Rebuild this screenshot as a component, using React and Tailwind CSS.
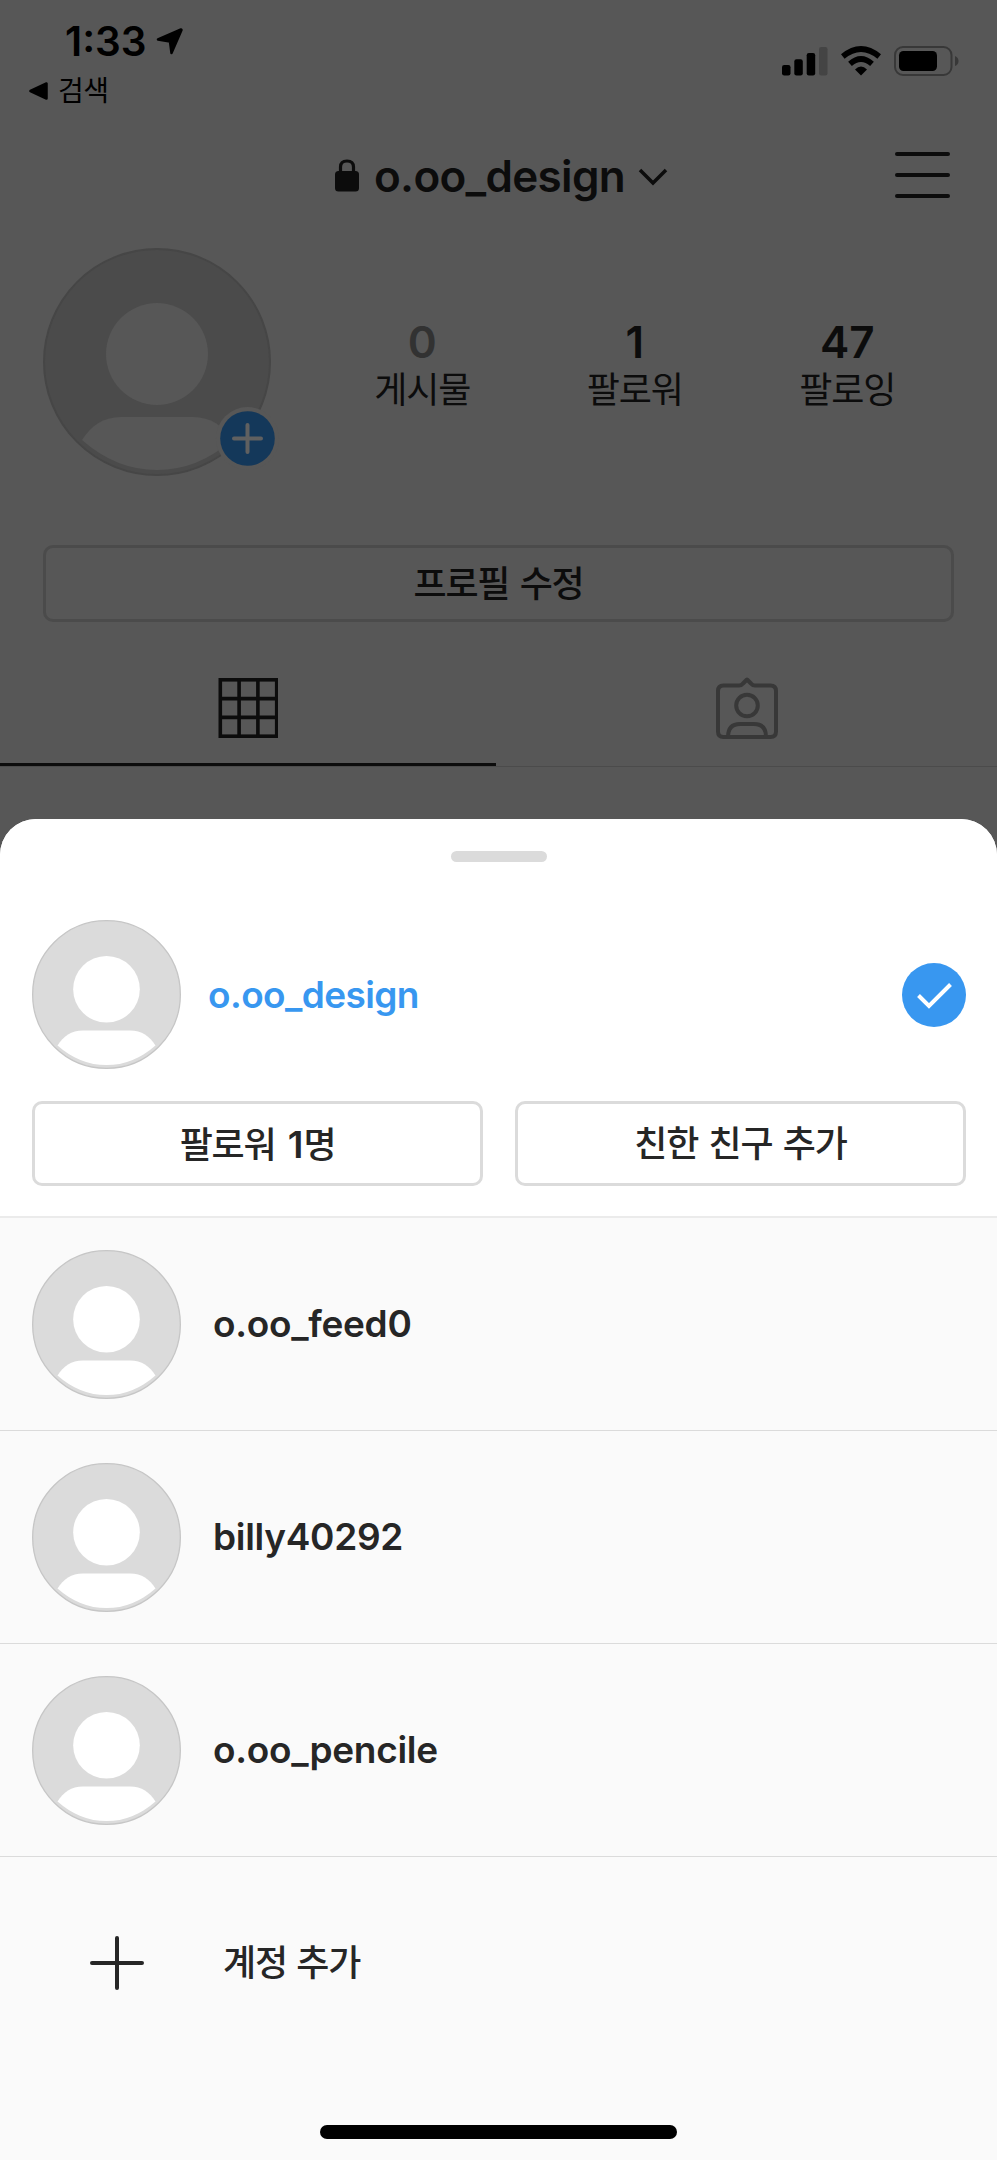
const accounts = ['o.oo_feed0', 'billy40292', 'o.oo_pencile'];

const stats = [
  { value: '0', label: '게시물', valueClass: 'text-[#323232]' },
  { value: '1', label: '팔로워', valueClass: 'text-[#0c0c0c]' },
  { value: '47', label: '팔로잉', valueClass: 'text-[#0c0c0c]' },
];

const Avatar = ({ className, base, ring, figure }) => (
  <svg className={className} viewBox="0 0 228 228" aria-hidden="true">
    <circle cx="114" cy="114" r="113" fill={base} stroke={ring} strokeWidth="2" />
    <circle cx="114" cy="106" r="51" fill={figure} />
    <path d="M39 192C48 178 60 169 78 169H150C168 169 180 178 189 192Q155 222 114 222Q73 222 39 192Z" fill={figure} />
  </svg>
);

const LightAvatar = () => (
  <Avatar className="h-[149px] w-[149px] shrink-0" base="#dbdbdb" ring="#c6c6c6" figure="#ffffff" />
);

const StatusBar = () => (
  <div className="flex h-[120px] justify-between pr-[37px] pl-[29px] text-black">
    <div className="pt-[18px]">
      <div className="flex h-[48px] items-center pl-[36px]">
        <span className="w-[91px] text-[40.5px] leading-none font-semibold">1:33</span>
        <svg className="-mt-[2px] h-[27px] w-[27px]" viewBox="0 0 27 27" aria-hidden="true">
          <path
            d="M25 1.5L2 11.5L14 13.5L15.5 25L25.5 2Z"
            fill="currentColor"
            stroke="currentColor"
            strokeWidth="2.5"
            strokeLinejoin="round"
          />
        </svg>
      </div>
      <div className="flex h-[50px] items-center">
        <svg className="h-[18px] w-[19px]" viewBox="0 0 19 18" aria-hidden="true">
          <path
            d="M1.5 9L17.5 1.5V16.5Z"
            fill="currentColor"
            stroke="currentColor"
            strokeWidth="2.5"
            strokeLinejoin="round"
          />
        </svg>
        <span className="ml-[10px] text-[28px] leading-none tracking-[-0.5px]">검색</span>
      </div>
    </div>
    <div className="flex gap-[13px] pt-[46px]">
      <svg className="h-[30px] w-[46px]" viewBox="0 0 46 30" fill="currentColor" aria-hidden="true">
        <rect x="0" y="19" width="8.5" height="10.5" rx="2.2" />
        <rect x="12.3" y="13.3" width="8.5" height="16.2" rx="2.2" />
        <rect x="24.7" y="7" width="8.5" height="22.5" rx="2.2" />
        <rect x="37" y="1" width="8.5" height="28.5" rx="2.2" fill="#444444" />
      </svg>
      <svg className="h-[30px] w-[40px]" viewBox="0 0 40 30" fill="none" aria-hidden="true">
        <path d="M1.8 10.5Q20 -4.5 38.2 10.5" stroke="currentColor" strokeWidth="5.6" />
        <path d="M9 17.8Q20 8.2 31 17.8" stroke="currentColor" strokeWidth="5.6" />
        <path d="M14 23.4Q20 17.4 26 23.4L20 29.5Z" fill="currentColor" />
      </svg>
      <svg className="h-[30px] w-[66px]" viewBox="0 0 66 30" aria-hidden="true">
        <rect x="1" y="1" width="56.5" height="28" rx="8" fill="none" stroke="#383838" strokeWidth="2" />
        <rect x="5" y="5" width="38" height="20" rx="4.5" fill="currentColor" />
        <path d="M61 10Q64.5 11.5 64.5 15Q64.5 18.5 61 20Z" fill="#383838" />
      </svg>
    </div>
  </div>
);

const ProfileHeader = () => (
  <div className="flex h-[110px] items-start pl-[334px] text-[#0c0c0c]">
    <svg className="mt-[39px] h-[34px] w-[26px]" viewBox="0 0 26 34" aria-hidden="true">
      <path d="M6.5 14V8Q6.5 2 13 2Q19.5 2 19.5 8V14" fill="none" stroke="currentColor" strokeWidth="3.2" />
      <rect x="1" y="12" width="24" height="20.5" rx="3.5" fill="currentColor" />
    </svg>
    <span className="ml-[14px] w-[252px] pt-[34px] text-[44px] leading-none font-semibold tracking-[-0.7px] whitespace-nowrap">
      o.oo_design
    </span>
    <svg className="mt-[47px] ml-[11px] h-[19px] w-[32px]" viewBox="0 0 32 19" fill="none" aria-hidden="true">
      <path d="M3 3L16 16L29 3" stroke="currentColor" strokeWidth="3.5" />
    </svg>
    <div className="mt-[32px] ml-auto mr-[47px] flex flex-col gap-[17px]">
      <div className="h-[4px] w-[55px] rounded-full bg-[#0c0c0c]" />
      <div className="h-[4px] w-[55px] rounded-full bg-[#0c0c0c]" />
      <div className="h-[4px] w-[55px] rounded-full bg-[#0c0c0c]" />
    </div>
  </div>
);

const ProfileSummary = () => (
  <div className="flex h-[315px] pt-[18px] pl-[43px]">
    <div className="relative h-[228px] w-[228px]">
      <Avatar className="h-full w-full" base="#4b4b4b" ring="#464646" figure="#575757" />
      <div className="absolute top-[159px] left-[173px] flex h-[63px] w-[63px] items-center justify-center rounded-full bg-[#575757]">
        <svg className="h-[55px] w-[55px]" viewBox="0 0 55 55" aria-hidden="true">
          <circle cx="27.5" cy="27.5" r="27.3" fill="#14385a" />
          <path d="M27.5 14V41M14 27.5H41" stroke="#606060" strokeWidth="4" strokeLinecap="round" />
        </svg>
      </div>
    </div>
    <div className="ml-[45px] flex pt-[70px]">
      {stats.map((stat) => (
        <div key={stat.label} className="flex w-[212.5px] flex-col items-center">
          <span className={`text-[44px] leading-[48px] font-semibold ${stat.valueClass}`}>{stat.value}</span>
          <span className="text-[36px] leading-[48px] tracking-[-1.2px] text-[#0c0c0c]">{stat.label}</span>
        </div>
      ))}
    </div>
  </div>
);

const ProfileTabs = () => (
  <div className="mt-[27px] flex h-[118px] border-b border-[#4b4b4b]">
    <div className="flex w-[496px] justify-center border-b-[3px] border-[#0c0c0c] pt-[29px]">
      <svg className="h-[60px] w-[60px]" viewBox="0 0 60 60" fill="none" aria-hidden="true">
        <rect x="2.3" y="1.8" width="56.4" height="56.4" stroke="#0c0c0c" strokeWidth="3.6" />
        <path d="M21.1 1V59M39.9 1V59M1 20.6H59M1 39.4H59" stroke="#0c0c0c" strokeWidth="3.6" />
      </svg>
    </div>
    <div className="flex flex-1 justify-center pt-[27px]">
      <svg className="h-[64px] w-[64px]" viewBox="0 0 64 64" fill="none" stroke="#383838" strokeWidth="4" aria-hidden="true">
        <path
          d="M8.5 9.5H24Q26.5 9.5 28 7.5L32 3.5L36 7.5Q37.5 9.5 40 9.5H55.5Q61 9.5 61 15V55.5Q61 61 55.5 61H8.5Q3 61 3 55.5V15Q3 9.5 8.5 9.5Z"
          strokeLinejoin="round"
        />
        <circle cx="32" cy="29.5" r="10.8" />
        <path d="M13 61Q13 48 25 48H39Q51 48 51 61" />
      </svg>
    </div>
  </div>
);

const ActiveAccount = () => (
  <div className="border-b-2 border-[#ebebeb] bg-white pr-[31px] pb-[30px] pl-[32px]">
    <div className="flex items-center">
      <LightAvatar />
      <span className="ml-[27px] text-[37px] leading-none font-semibold tracking-[-0.6px] text-[#3897f0]">o.oo_design</span>
      <svg className="ml-auto h-[64px] w-[64px]" viewBox="0 0 64 64" fill="none" aria-hidden="true">
        <circle cx="32" cy="32" r="32" fill="#3897f0" />
        <path d="M16.5 32.5L27 43L48.5 21.5" stroke="#ffffff" strokeWidth="4" />
      </svg>
    </div>
    <div className="mt-[32px] grid grid-cols-2 gap-[32px] text-[36px] font-medium tracking-[-1.2px] text-[#262626]">
      <button className="h-[85px] rounded-[10px] border-[3px] border-[#dbdbdb] pt-px leading-none [word-spacing:4px]">
        팔로워 <span className="text-[37px] font-semibold tracking-normal">1</span>명
      </button>
      <button className="h-[85px] rounded-[10px] border-[3px] border-[#dbdbdb] pt-px leading-none [word-spacing:2px]">
        친한 친구 추가
      </button>
    </div>
  </div>
);

const AccountSheet = () => (
  <div className="flex flex-1 flex-col overflow-hidden rounded-t-[36px] bg-[#fafafa]">
    <div className="flex h-[101px] justify-center bg-white pt-[32px]">
      <div className="h-[11px] w-[96px] rounded-full bg-[#dbdbdb]" />
    </div>
    <ActiveAccount />
    {accounts.map((name) => (
      <div key={name} className="flex h-[213px] items-center border-b border-[#dbdbdb] pl-[32px]">
        <LightAvatar />
        <span className="ml-[32px] pb-[2px] text-[37px] leading-none font-semibold tracking-[-0.3px] text-[#262626]">{name}</span>
      </div>
    ))}
    <div className="flex h-[212px] items-center pl-[90px] text-[#262626]">
      <svg className="h-[54px] w-[54px]" viewBox="0 0 54 54" aria-hidden="true">
        <path d="M27 2V52M2 27H52" stroke="currentColor" strokeWidth="4" strokeLinecap="round" />
      </svg>
      <span className="ml-[79px] text-[36px] leading-none font-medium tracking-[-1.2px] [word-spacing:1px]">계정 추가</span>
    </div>
    <div className="mt-auto mb-[21px] h-[14px] w-[357px] self-center rounded-full bg-black" />
  </div>
);

export default function App() {
  return (
    <div className="flex h-[2160px] w-[997px] flex-col overflow-hidden bg-[#575757] font-['Inter','Noto_Sans_CJK_KR',sans-serif]">
      <div className="h-[819px] shrink-0">
        <StatusBar />
        <ProfileHeader />
        <ProfileSummary />
        <button className="mx-[43px] flex h-[77px] w-[911px] items-center justify-center rounded-[10px] border-[3px] border-[#4b4b4b] text-[36px] leading-none font-medium tracking-[-1.2px] text-[#0c0c0c] [word-spacing:2px]">
          프로필 수정
        </button>
        <ProfileTabs />
      </div>
      <AccountSheet />
    </div>
  );
}
